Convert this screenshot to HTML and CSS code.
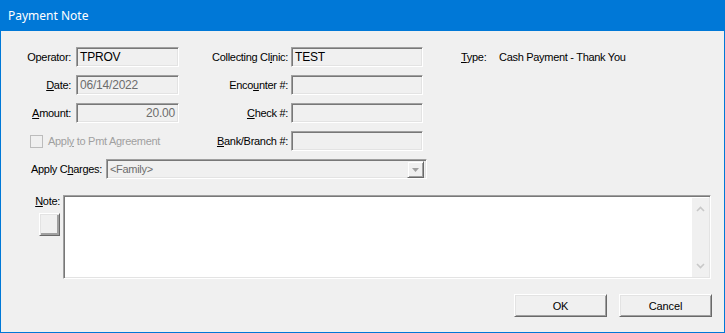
FILE: index.html
```html
<!DOCTYPE html>
<html>
<head>
<meta charset="utf-8">
<link rel="stylesheet" href="styles.css">
</head>
<body>
<div class="window">
  <div class="titlebar">Payment Note</div>
  <div class="grid">
    <div class="lbl">Operator:</div>
    <div class="field">TPROV</div>
    <div class="lbl lbl-mid">Collecting Cl<u>i</u>nic:</div>
    <div class="field">TEST</div>
    <div class="type"><span class="type-lbl"><u>T</u>ype:</span><span>Cash Payment - Thank You</span></div>

    <div class="lbl"><u>D</u>ate:</div>
    <div class="field disabled">06/14/2022</div>
    <div class="lbl lbl-mid">Enco<u>u</u>nter #:</div>
    <div class="field"></div>
    <div></div>

    <div class="lbl"><u>A</u>mount:</div>
    <div class="field disabled right">20.00</div>
    <div class="lbl lbl-mid"><u>C</u>heck #:</div>
    <div class="field"></div>
    <div></div>

    <div class="check-row"><span class="checkbox"></span><span class="check-text">Appl<u>y</u> to Pmt Agreement</span></div>
    <div class="lbl lbl-mid"><u>B</u>ank/Branch #:</div>
    <div class="field"></div>
    <div></div>
  </div>

  <div class="combo-row">
    <div class="combo-lbl">Apply C<u>h</u>arges:</div>
    <div class="combo">
      <span class="combo-text">&lt;Family&gt;</span>
      <span class="combo-btn"><svg width="7" height="4" viewBox="0 0 7 4"><polygon points="0,0 7,0 3.5,4" fill="#a0a0a0"/></svg></span>
    </div>
  </div>

  <div class="note-row">
    <div class="note-left">
      <div class="note-lbl"><u>N</u>ote:</div>
      <div class="note-btn"></div>
    </div>
    <div class="note-box">
      <div class="note-text"></div>
      <div class="scroll">
        <svg width="9" height="6" viewBox="0 0 9 6"><polyline points="1,5 4.5,1.5 8,5" fill="none" stroke="#c8c8c8" stroke-width="1.6"/></svg>
        <svg width="9" height="6" viewBox="0 0 9 6"><polyline points="1,1 4.5,4.5 8,1" fill="none" stroke="#c8c8c8" stroke-width="1.6"/></svg>
      </div>
    </div>
  </div>

  <div class="buttons">
    <div class="btn">OK</div>
    <div class="btn">Cancel</div>
  </div>
</div>
</body>
</html>
```

FILE: styles.css
```css
html, body {
  margin: 0;
  padding: 0;
  background: #f0f0f0;
}

.window {
  width: 725px;
  height: 333px;
  box-sizing: border-box;
  border: 1px solid #0078d7;
  border-top: none;
  background: #f0f0f0;
  font-family: "Liberation Sans", Arial, sans-serif;
  font-size: 11px;
  letter-spacing: -0.3px;
  color: #000;
}

.titlebar {
  height: 31px;
  line-height: 31px;
  background: #0078d7;
  color: #fff;
  font-family: "Noto Sans", "Open Sans", sans-serif;
  font-size: 12px;
  letter-spacing: 0;
  padding-left: 8px;
  margin: 0 -1px;
}

u {
  text-decoration: underline;
  text-underline-offset: 1px;
}

.grid {
  display: grid;
  grid-template-columns: 75px 103px 112px 132px 1fr;
  grid-auto-rows: 20px;
  row-gap: 8px;
  margin-top: 16px;
}

.lbl {
  display: flex;
  align-items: center;
  justify-content: flex-end;
  padding-right: 5px;
  white-space: nowrap;
}

.lbl-mid {
  padding-right: 3px;
}

.field {
  box-sizing: border-box;
  height: 20px;
  border: 1px solid;
  border-color: #a0a0a0 #ffffff #ffffff #a0a0a0;
  box-shadow: inset 1px 1px 0 #787878, inset -1px -1px 0 #e3e3e3;
  background: #f0f0f0;
  padding: 0 3px;
  display: flex;
  align-items: center;
  white-space: nowrap;
  font-size: 12px;
  letter-spacing: -0.2px;
}

.field.disabled {
  color: #6d6d6d;
}

.field.right {
  justify-content: flex-end;
}

.type {
  display: flex;
  align-items: center;
  padding-left: 38px;
  white-space: nowrap;
}

.type-lbl {
  width: 38px;
}

.check-row {
  grid-column: 1 / 3;
  display: flex;
  align-items: center;
  padding-left: 29px;
  color: #a0a0a0;
  white-space: nowrap;
}

.checkbox {
  width: 13px;
  height: 13px;
  box-sizing: border-box;
  border: 1px solid #bcbcbc;
  background: #f0f0f0;
  margin-right: 5px;
}

.combo-row {
  display: flex;
  align-items: center;
  margin-top: 8px;
  padding-left: 30px;
}

.combo-lbl {
  width: 70px;
  text-align: right;
  margin-right: 5px;
  white-space: nowrap;
}

.combo {
  box-sizing: border-box;
  width: 321px;
  height: 20px;
  border: 1px solid;
  border-color: #a0a0a0 #ffffff #ffffff #a0a0a0;
  box-shadow: inset 1px 1px 0 #787878, inset -1px -1px 0 #e3e3e3;
  display: flex;
  align-items: center;
  padding: 1px 2px 1px 3px;
}

.combo-text {
  flex: 1;
  color: #6d6d6d;
}

.combo-btn {
  width: 17px;
  height: 17px;
  box-sizing: border-box;
  border: 1px solid;
  border-color: #f0f0f0 #696969 #696969 #f0f0f0;
  box-shadow: inset 1px 1px 0 #ffffff, inset -1px -1px 0 #a0a0a0;
  display: flex;
  align-items: center;
  justify-content: center;
  padding-top: 1px;
}

.note-row {
  display: flex;
  margin-top: 16px;
}

.note-left {
  width: 62px;
  box-sizing: border-box;
  padding-right: 3px;
  display: flex;
  flex-direction: column;
  align-items: flex-end;
}

.note-lbl {
  line-height: 13px;
}

.note-btn {
  margin-top: 5px;
  width: 21px;
  height: 23px;
  box-sizing: border-box;
  border: 1px solid;
  border-color: #ffffff #696969 #696969 #ffffff;
  box-shadow: inset 1px 1px 0 #e3e3e3, inset -2px -2px 0 #a0a0a0;
  background: #f0f0f0;
}

.note-box {
  box-sizing: border-box;
  width: 648px;
  height: 84px;
  border: 1px solid;
  border-color: #a0a0a0 #ffffff #ffffff #a0a0a0;
  box-shadow: inset 1px 1px 0 #787878, inset -1px -1px 0 #e3e3e3;
  background: #ffffff;
  display: flex;
  padding: 2px 1px 1px 2px;
}

.note-text {
  flex: 1;
  background: #ffffff;
}

.scroll {
  width: 17px;
  background: #f0f0f0;
  display: flex;
  flex-direction: column;
  justify-content: space-between;
  align-items: center;
  padding: 8px 0 8px;
}

.buttons {
  display: flex;
  justify-content: flex-end;
  gap: 12px;
  margin-top: 15px;
  padding-right: 12px;
}

.btn {
  box-sizing: border-box;
  width: 93px;
  height: 23px;
  border: 1px solid;
  border-color: #ffffff #696969 #696969 #ffffff;
  box-shadow: inset 1px 1px 0 #e3e3e3, inset -1px -1px 0 #a0a0a0;
  background: #f0f0f0;
  display: flex;
  align-items: center;
  justify-content: center;
  letter-spacing: -0.1px;
}
```
